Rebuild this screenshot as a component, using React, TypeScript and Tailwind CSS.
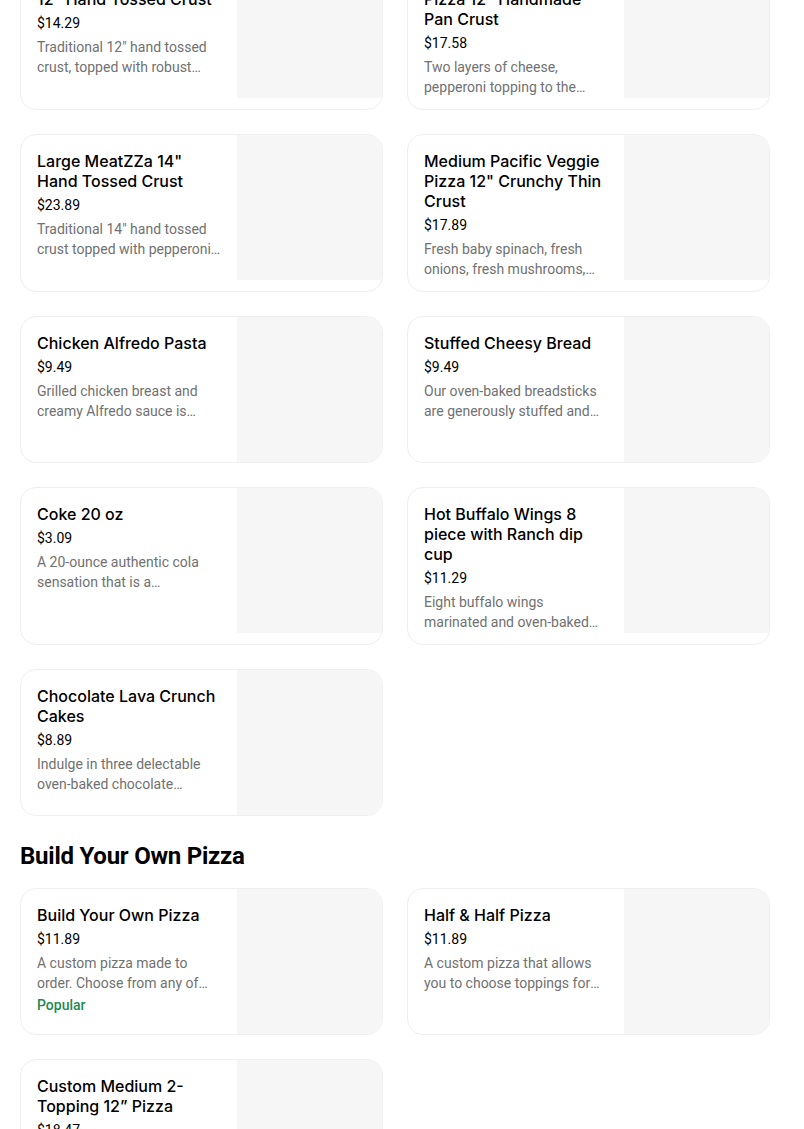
import React from "react";

type Item = { title: string; price: string; desc: string; popular?: boolean };

const rows1: Item[] = [
  { title: 'Medium Pepperoni\n12" Hand Tossed Crust', price: "$14.29", desc: 'Traditional 12" hand tossed crust, topped with robust inspired tomato sauce and pepperoni.' },
  { title: 'Medium ExtravaganZZa\nPizza 12" Handmade Pan Crust', price: "$17.58", desc: "Two layers of cheese, pepperoni topping to the edge of a buttery crust." },
  { title: 'Large MeatZZa 14" Hand Tossed Crust', price: "$23.89", desc: 'Traditional 14" hand tossed crust topped with pepperoni, ham, Italian sausage and beef.' },
  { title: 'Medium Pacific Veggie Pizza 12" Crunchy Thin Crust', price: "$17.89", desc: "Fresh baby spinach, fresh onions, fresh mushrooms, tomatoes, black olives and roasted red peppers." },
  { title: "Chicken Alfredo Pasta", price: "$9.49", desc: "Grilled chicken breast and creamy Alfredo sauce is mixed with penne pasta and baked to creamy perfection." },
  { title: "Stuffed Cheesy Bread", price: "$9.49", desc: "Our oven-baked breadsticks are generously stuffed and covered with a blend of cheese." },
  { title: "Coke 20 oz", price: "$3.09", desc: "A 20-ounce authentic cola sensation that is a quintessential part of sharing life's enjoyable moments." },
  { title: "Hot Buffalo Wings 8 piece with Ranch dip cup", price: "$11.29", desc: "Eight buffalo wings marinated and oven-baked and then smothered in hot buffalo sauce." },
  { title: "Chocolate Lava Crunch Cakes", price: "$8.89", desc: "Indulge in three delectable oven-baked chocolate confections with molten chocolate fudge on the inside." },
];

const rows2: Item[] = [
  { title: "Build Your Own Pizza", price: "$11.89", desc: "A custom pizza made to order. Choose from any of our delicious crust styles, sauces and toppings.", popular: true },
  { title: "Half & Half Pizza", price: "$11.89", desc: "A custom pizza that allows you to choose toppings for each half of the pizza." },
  { title: "Custom Medium 2-Topping 12\u201D Pizza", price: "$18.47", desc: "Your choice of two toppings on a medium pizza." },
];

function Card({ item }: { item: Item }) {
  return (
    <div className="flex items-start overflow-hidden rounded-[16px] border border-[#efefef] bg-white">
      <div className="flex min-w-0 flex-1 flex-col pl-4 pr-4 pt-4 pb-3">
        <div
          className="whitespace-pre-line text-[16px] font-medium leading-[20px] text-black"
          style={{ fontFamily: "Inter, 'Noto Sans', sans-serif" }}
        >
          {item.title}
        </div>
        <div className="mt-1 text-[14px] leading-[20px] text-black">{item.price}</div>
        <div className="mt-1 line-clamp-2 text-[14px] leading-[20px] text-[#717171]">{item.desc}</div>
        {item.popular && (
          <div className="mt-[2px] text-[14px] font-medium leading-[20px] text-[#1f8a4f]">Popular</div>
        )}
      </div>
      <div className="h-[145px] w-[145px] shrink-0 bg-[#f6f6f6]" />
    </div>
  );
}

export default function App() {
  return (
    <div className="min-h-[1129px] overflow-hidden bg-white" style={{ fontFamily: "Roboto, 'Noto Sans', sans-serif" }}>
      <div className="ml-5 mt-[-48px] w-[750px]">
        <div className="grid grid-cols-2 gap-6">
          {rows1.map((it, i) => (
            <Card key={i} item={it} />
          ))}
        </div>
        <h2 className="mt-6 mb-4 text-[24px] font-bold leading-[32px] tracking-[-0.01em] text-black">Build Your Own Pizza</h2>
        <div className="grid grid-cols-2 gap-6">
          {rows2.map((it, i) => (
            <Card key={i} item={it} />
          ))}
        </div>
      </div>
    </div>
  );
}
